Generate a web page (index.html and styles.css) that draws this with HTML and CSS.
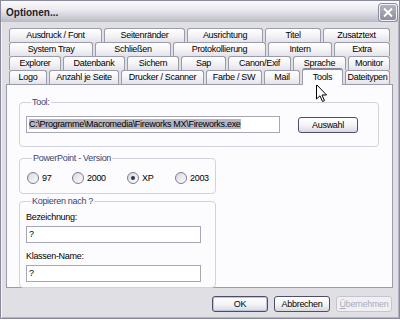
FILE: index.html
```html
<!DOCTYPE html>
<html lang="de">
<head>
    <meta charset="UTF-8">
    <title>Optionen...</title>
    <link rel="stylesheet" href="styles.css">
</head>
<body>
    <div class="window">
        <div class="titlebar">
            <span class="title">Optionen...</span>
            <div class="close">
                <svg width="12" height="11" viewBox="0 0 12 11">
                    <path d="M2 1.5 L10 9.5 M10 1.5 L2 9.5" stroke="#fff" stroke-width="1.8" fill="none"/>
                </svg>
            </div>
        </div>

        <div class="content">
            <div class="tabs">
                <div class="tab-row row1">
                    <div class="tab">Ausdruck / Font</div>
                    <div class="tab">Seitenränder</div>
                    <div class="tab">Ausrichtung</div>
                    <div class="tab">Titel</div>
                    <div class="tab">Zusatztext</div>
                </div>
                <div class="tab-row row2">
                    <div class="tab">System Tray</div>
                    <div class="tab">Schließen</div>
                    <div class="tab">Protokollierung</div>
                    <div class="tab">Intern</div>
                    <div class="tab">Extra</div>
                </div>
                <div class="tab-row row3">
                    <div class="tab">Explorer</div>
                    <div class="tab">Datenbank</div>
                    <div class="tab">Sichern</div>
                    <div class="tab">Sap</div>
                    <div class="tab">Canon/Exif</div>
                    <div class="tab">Sprache</div>
                    <div class="tab">Monitor</div>
                </div>
                <div class="tab-row row4">
                    <div class="tab">Logo</div>
                    <div class="tab">Anzahl je Seite</div>
                    <div class="tab">Drucker / Scanner</div>
                    <div class="tab">Farbe / SW</div>
                    <div class="tab">Mail</div>
                    <div class="tab active">Tools</div>
                    <div class="tab">Dateitypen</div>
                </div>
            </div>

            <div class="panel">
                <fieldset class="group group-tool">
                    <legend>Tool:</legend>
                    <div class="tool-row">
                        <div class="textbox path"><span class="sel">C:\Programme\Macromedia\Fireworks MX\Fireworks.exe</span></div>
                        <button class="btn btn-choose">Auswahl</button>
                    </div>
                </fieldset>

                <fieldset class="group group-small group-version">
                    <legend>PowerPoint - Version</legend>
                    <div class="radios">
                        <label class="radio"><span class="dot"></span>97</label>
                        <label class="radio"><span class="dot"></span>2000</label>
                        <label class="radio"><span class="dot checked"></span>XP</label>
                        <label class="radio"><span class="dot"></span>2003</label>
                    </div>
                </fieldset>

                <fieldset class="group group-small group-copy">
                    <legend>Kopieren nach ?</legend>
                    <div class="field">
                        <div class="field-label">Bezeichnung:</div>
                        <div class="textbox small">?</div>
                    </div>
                    <div class="field">
                        <div class="field-label">Klassen-Name:</div>
                        <div class="textbox small">?</div>
                    </div>
                </fieldset>
            </div>

            <div class="footer">
                <button class="btn btn-default">OK</button>
                <button class="btn">Abbrechen</button>
                <button class="btn btn-disabled"><u>Ü</u>bernehmen</button>
            </div>
        </div>

        <svg class="cursor" width="12" height="19" viewBox="0 0 12 19">
            <path d="M0.5 0.5 L0.5 15 L4 11.8 L6.5 17.5 L8.5 16.6 L6 11 L10.5 11 Z" fill="#fff" stroke="#000" stroke-width="1"/>
        </svg>
    </div>
</body>
</html>
```

FILE: styles.css
```css
* {
    margin: 0;
    padding: 0;
    box-sizing: border-box;
}
body {
    background: #fff;
    font-family: "Liberation Sans", Arial, sans-serif;
    font-size: 9px;
    letter-spacing: -0.3px;
    color: #000;
}
.window {
    position: relative;
    width: 400px;
    height: 319px;
    border: 1px solid #8a8a9e;
    background: #e0dfe3;
    box-shadow: inset 1px 0 0 #f4f4f8, inset -1px -1px 0 #b4b3c4;
    display: flex;
    flex-direction: column;
}
.titlebar {
    height: 21px;
    display: flex;
    align-items: center;
    justify-content: space-between;
    padding: 0 2px 0 5px;
    background: linear-gradient(#fbfbfd, #ebebf0 40%, #cfcfd8 75%, #b9b9c6);
}
.title {
    font-size: 10px;
    font-weight: bold;
    letter-spacing: 0;
    color: #1c1c2c;
    padding-top: 2px;
}
.close {
    width: 18px;
    height: 17px;
    margin-top: 2px;
    border: 1px solid #f2f2f6;
    border-radius: 3px;
    background: linear-gradient(#b3b3c0, #8e8e9e);
    display: flex;
    align-items: center;
    justify-content: center;
    box-shadow: 0 0 0 1px #8c8c9c;
}
.content {
    flex: 1;
    padding: 6px 6px 0 5px;
}

/* tabs */
.tabs {
    margin: 0 3px;
}
.tab-row {
    display: grid;
    column-gap: 2px;
    height: 14px;
}
.row1 { grid-template-columns: 93px 81px 76px 56px 1fr; }
.row2 { grid-template-columns: 84px 76px 93px 64px 1fr; }
.row3 { grid-template-columns: 52px 62px 52px 45px 63px 53px 1fr; }
.row4 { grid-template-columns: 38px 70px 83px 56px 36px 41px 1fr; }
.tab {
    border: 1px solid #9b9bae;
    border-bottom: none;
    border-radius: 3px 3px 0 0;
    background: linear-gradient(#ffffff, #f3f3f6 55%, #e2e2e9);
    text-align: center;
    line-height: 12px;
    white-space: nowrap;
    overflow: hidden;
}
.tab.active {
    position: relative;
    z-index: 1;
    margin: -2px 0 -1px;
    border-top: 2px solid #8a8a9c;
    background: #fcfcfe;
    line-height: 14px;
}

/* panel */
.panel {
    height: 204px;
    background: #fcfcfe;
    border: 1px solid #9b9bae;
    padding: 12px 13px 0 12px;
}
.group {
    border: 1px solid #d2d2dc;
    border-radius: 4px;
    min-width: 0;
}
.group legend {
    margin-left: 5px;
    padding: 0 1px;
    line-height: 10px;
    color: #3c4274;
}
.group-tool {
    padding: 9px 20px 13px 6px;
}
.tool-row {
    display: flex;
    align-items: center;
    gap: 18px;
}
.textbox {
    height: 17px;
    background: #fff;
    border: 1px solid #a6a6b6;
    padding: 2px 2px;
    line-height: 11px;
    white-space: nowrap;
    overflow: hidden;
}
.path {
    width: 254px;
}
.sel {
    background: #b6b6c2;
}
.group-small {
    width: 197px;
}
.group-version {
    margin-top: 6px;
    padding: 9px 6px 9px 7px;
}
.radios {
    display: grid;
    grid-template-columns: 45px 55px 48px 1fr;
}
.radio {
    display: flex;
    align-items: center;
    gap: 3px;
}
.dot {
    position: relative;
    width: 12px;
    height: 12px;
    border: 1px solid #7b7b92;
    border-radius: 50%;
    background: linear-gradient(135deg, #d6d6de, #ffffff);
}
.dot.checked::after {
    content: "";
    position: absolute;
    left: 3px;
    top: 3px;
    width: 4px;
    height: 4px;
    border-radius: 50%;
    background: #34344a;
}
.group-copy {
    margin-top: 2px;
    padding: 5px 6px 5px 6px;
}
.field-label {
    line-height: 11px;
    padding: 1px 0 3px;
}
.field + .field {
    margin-top: 7px;
}
.small {
    width: 175px;
}

/* buttons */
.btn {
    height: 16px;
    font-family: inherit;
    font-size: 9px;
    letter-spacing: -0.3px;
    color: #000;
    border: 1px solid #4e4e6c;
    border-radius: 3px;
    background: linear-gradient(#ffffff, #f3f3f6 55%, #d7d7df);
}
.btn-choose {
    width: 60px;
}
.footer {
    display: flex;
    justify-content: flex-end;
    gap: 6px;
    padding: 8px 1px 0 0;
}
.footer .btn {
    width: 56px;
}
.btn-default {
    box-shadow: inset 0 0 0 1px #b9c3e0;
}
.btn-disabled {
    color: #acacbc;
    border-color: #c4c4d0;
    background: #f0f0f3;
}
.btn-disabled u {
    text-decoration: underline;
}
.cursor {
    position: absolute;
    left: 315px;
    top: 83px;
}
```
